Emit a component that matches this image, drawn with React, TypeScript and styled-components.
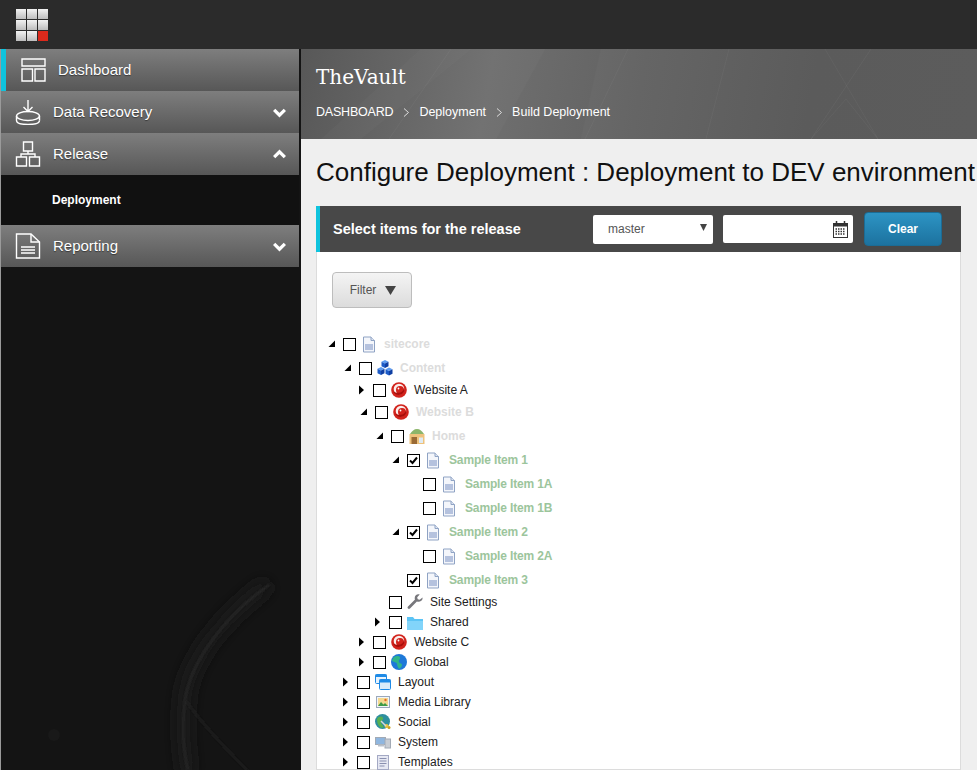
import React from "react";
import styled, { createGlobalStyle } from "styled-components";

const GlobalStyle = createGlobalStyle`
  html, body {
    margin: 0;
    padding: 0;
    height: 100%;
    overflow: hidden;
    background: #efefef;
    font-family: "Liberation Sans", Arial, sans-serif;
  }
`;

type Kind =
  | "doc"
  | "cubes"
  | "swirl"
  | "home"
  | "wrench"
  | "folder"
  | "globe"
  | "windows"
  | "image"
  | "social"
  | "system"
  | "template";

type Tone = "plain" | "muted" | "picked";

type Node = {
  label: string;
  depth: number;
  icon: Kind;
  tone: Tone;
  arrow?: "open" | "closed";
  checked?: boolean;
};

const nodes: Node[] = [
  { label: "sitecore", depth: 0, icon: "doc", tone: "muted", arrow: "open" },
  { label: "Content", depth: 1, icon: "cubes", tone: "muted", arrow: "open" },
  { label: "Website A", depth: 2, icon: "swirl", tone: "plain", arrow: "closed" },
  { label: "Website B", depth: 2, icon: "swirl", tone: "muted", arrow: "open" },
  { label: "Home", depth: 3, icon: "home", tone: "muted", arrow: "open" },
  { label: "Sample Item 1", depth: 4, icon: "doc", tone: "picked", arrow: "open", checked: true },
  { label: "Sample Item 1A", depth: 5, icon: "doc", tone: "picked" },
  { label: "Sample Item 1B", depth: 5, icon: "doc", tone: "picked" },
  { label: "Sample Item 2", depth: 4, icon: "doc", tone: "picked", arrow: "open", checked: true },
  { label: "Sample Item 2A", depth: 5, icon: "doc", tone: "picked" },
  { label: "Sample Item 3", depth: 4, icon: "doc", tone: "picked", checked: true },
  { label: "Site Settings", depth: 3, icon: "wrench", tone: "plain" },
  { label: "Shared", depth: 3, icon: "folder", tone: "plain", arrow: "closed" },
  { label: "Website C", depth: 2, icon: "swirl", tone: "plain", arrow: "closed" },
  { label: "Global", depth: 2, icon: "globe", tone: "plain", arrow: "closed" },
  { label: "Layout", depth: 1, icon: "windows", tone: "plain", arrow: "closed" },
  { label: "Media Library", depth: 1, icon: "image", tone: "plain", arrow: "closed" },
  { label: "Social", depth: 1, icon: "social", tone: "plain", arrow: "closed" },
  { label: "System", depth: 1, icon: "system", tone: "plain", arrow: "closed" },
  { label: "Templates", depth: 1, icon: "template", tone: "plain", arrow: "closed" },
];

const Cube = ({ x, y }: { x: number; y: number }) => (
  <g transform={`translate(${x} ${y})`}>
    <path d="M0 1.800L3.500 0 7 1.800 3.500 3.600z" fill="#5d9cf2" />
    <path d="M0 1.800L3.500 3.600V8L0 6.200z" fill="#1d5cc8" />
    <path d="M7 1.800L3.500 3.600V8L7 6.200z" fill="#0f3fa3" />
  </g>
);

const TreeIcon = ({ kind }: { kind: Kind }) => {
  switch (kind) {
    case "doc":
      return (
        <svg width="16" height="17" viewBox="0 0 16 17">
          <path d="M2.500 1h7.500l3.500 3.500v11.500h-11z" fill="#f4f6fb" stroke="#8fa3c4" />
          <path d="M10 1v3.500h3.500" fill="#dde4f1" stroke="#8fa3c4" />
          <rect x="4" y="8" width="8" height="6" fill="#b5c2de" />
        </svg>
      );
    case "cubes":
      return (
        <svg width="16" height="16" viewBox="0 0 16 16">
          <Cube x={4.500} y={0} />
          <Cube x={0.500} y={7} />
          <Cube x={8.500} y={7.500} />
        </svg>
      );
    case "swirl":
      return (
        <svg width="16" height="16" viewBox="0 0 16 16">
          <circle cx="8" cy="8" r="7.800" fill="#d2231c" />
          <circle cx="8" cy="7" r="5.300" fill="#fbeeec" />
          <circle cx="9" cy="8" r="4" fill="#d2231c" />
          <path d="M2 9.500c2 4 7.500 4.500 10.200 1.300 1.200-1.500 1.500-3.300 1-4.800-0.700 3-3 4.800-5.700 4.800-2.200 0-3.900-0.400-5.500-1.300z" fill="#a80f0b" />
          <circle cx="7.500" cy="6.500" r="0.900" fill="#fff" />
        </svg>
      );
    case "home":
      return (
        <svg width="16" height="16" viewBox="0 0 16 16">
          <path d="M1 6C3 3 5 1 8 1s5 2 7 5z" fill="#8cb56a" />
          <rect x="0.500" y="6" width="15" height="10" fill="#eec27c" />
          <rect x="2.500" y="9" width="5.500" height="7" fill="#9a6a35" />
          <rect x="10" y="9.500" width="4" height="5.500" fill="#dfeaf2" />
        </svg>
      );
    case "wrench":
      return (
        <svg width="16" height="16" viewBox="0 0 16 16">
          <path d="M15.500 3.500l-2.800 2.300-2-0.500-0.500-2 2.500-2.800c-2.500-0.800-5 0.800-5 3.500 0 0.700 0.100 1.200 0.300 1.600l-7 6.900c-0.700 0.800-0.500 1.500 0 2 0.500 0.600 1.300 0.700 2 0l6.900-7.100c2.900 1 6.200-1 5.600-3.900z" fill="#77777c" />
        </svg>
      );
    case "folder":
      return (
        <svg width="16" height="16" viewBox="0 0 16 16">
          <path d="M0 3h6l1.500 2H16v11H0z" fill="#5cc4f5" />
          <rect x="0" y="7" width="16" height="9" fill="#82d4fa" />
        </svg>
      );
    case "globe":
      return (
        <svg width="16" height="16" viewBox="0 0 16 16">
          <circle cx="8" cy="8" r="8" fill="#1e78d8" />
          <path d="M3 3c2-1.500 5-1.500 6 0 1 2-2 3-1 5 1 2 3 1 3 3s-2 3-3 4c-1-2-2-3-2-5S2 8 1 7c0-1 1-3 2-4z" fill="#2fb58a" />
        </svg>
      );
    case "windows":
      return (
        <svg width="16" height="16" viewBox="0 0 16 16">
          <rect x="0.500" y="0.500" width="11" height="9" rx="1" fill="#e7f3fd" stroke="#1e8ae6" />
          <rect x="0.500" y="0.500" width="11" height="2.500" fill="#1e8ae6" />
          <rect x="4.500" y="5.500" width="11" height="10" rx="1" fill="#d9ebfa" stroke="#1e8ae6" />
          <rect x="4.500" y="5.500" width="11" height="3" fill="#1e8ae6" />
        </svg>
      );
    case "image":
      return (
        <svg width="16" height="16" viewBox="0 0 16 16">
          <rect x="1.500" y="2.500" width="13" height="11" fill="#f2f5f9" stroke="#9aa8bb" />
          <rect x="3" y="4" width="10" height="8" fill="#f5d98f" />
          <path d="M3 12l3-4 2.500 2.500L10 9l3 3z" fill="#3f9b48" />
          <circle cx="10.500" cy="6" r="1.200" fill="#e66a28" />
        </svg>
      );
    case "social":
      return (
        <svg width="16" height="16" viewBox="0 0 16 16">
          <circle cx="7.500" cy="7.500" r="7.500" fill="#2e8f9f" />
          <path d="M2 5c2-3 5-3 6-1s-3 3-2 5 3 2 2 5C5 14 2 11 2 5z" fill="#58b050" />
          <circle cx="11.500" cy="12" r="2" fill="#e9c33c" />
          <circle cx="14" cy="13.500" r="1.500" fill="#c9a020" />
          <path d="M6 7l5 5" stroke="#d8d8d8" strokeWidth="1.500" />
        </svg>
      );
    case "system":
      return (
        <svg width="16" height="16" viewBox="0 0 16 16">
          <rect x="0.500" y="3.500" width="10" height="7" fill="#8fb6df" stroke="#a2aab5" />
          <rect x="3" y="10.500" width="6" height="2" fill="#b9c0c9" />
          <rect x="10" y="5" width="5.500" height="9" fill="#c8cdd4" stroke="#a2aab5" />
        </svg>
      );
    case "template":
      return (
        <svg width="16" height="16" viewBox="0 0 16 16">
          <rect x="2.500" y="1.500" width="11" height="14" fill="#e6e8f3" stroke="#a4a9c4" />
          <path d="M4.500 4.500h7M4.500 7h7M4.500 9.500h7M4.500 12h5" stroke="#8a90b0" />
        </svg>
      );
  }
};

const Page = styled.div`
  width: 977px;
  height: 770px;
  overflow: hidden;
  display: flex;
  flex-direction: column;
`;

const TopBar = styled.header`
  height: 49px;
  flex: none;
  display: flex;
  align-items: center;
  padding-left: 16px;
  background: #2b2b2b;
`;

const Logo = styled.div`
  display: grid;
  grid-template-columns: repeat(3, 10px);
  grid-template-rows: repeat(3, 10px);
  gap: 1px;
`;

const LogoCell = styled.span<{ $red?: boolean }>`
  background: ${(p) => (p.$red ? "#dc2a1c" : "linear-gradient(#f2f2f2, #bdbdbd)")};
`;

const Body = styled.div`
  flex: 1;
  min-height: 0;
  display: flex;
`;

const Sidebar = styled.nav`
  position: relative;
  width: 301px;
  flex: none;
  box-sizing: border-box;
  padding-right: 2px;
  border-left: 1px solid #9a9a9a;
  background: #141414;
  overflow: hidden;
`;

const Smoke = styled.svg`
  position: absolute;
  left: 0;
  bottom: 0;
`;

const MenuRow = styled.div<{ $active?: boolean }>`
  position: relative;
  height: 42px;
  box-sizing: border-box;
  display: flex;
  align-items: center;
  padding-left: 14px;
  color: #fff;
  font-size: 15px;
  text-shadow: 0 1px 1px rgba(0, 0, 0, 0.45);
  background: linear-gradient(#7e7e7e, #575757);
  ${(p) => p.$active && "border-left: 5px solid #0fc3dd;"}
`;

const MenuIcon = styled.svg`
  flex: none;
  width: 26px;
  height: 26px;
  fill: none;
  stroke: #fff;
  stroke-width: 1.4;
`;

const MenuLabel = styled.span`
  flex: 1;
  margin: 0 0 2px 12px;
`;

const Chevron = styled.svg`
  width: 15px;
  height: 15px;
  margin-right: 12px;
  fill: none;
  stroke: #fff;
  stroke-width: 3;
`;

const SubMenu = styled.div`
  position: relative;
  height: 50px;
  display: flex;
  align-items: center;
  padding-left: 51px;
  background: #111;
  color: #fff;
  font-size: 12px;
  font-weight: bold;
`;

const Main = styled.main`
  flex: 1;
  min-width: 0;
  display: flex;
  flex-direction: column;
`;

const Hero = styled.section`
  position: relative;
  height: 90px;
  flex: none;
  box-sizing: border-box;
  padding: 14px 15px 0;
  overflow: hidden;
  color: #fff;
  background: linear-gradient(100deg, #585858 0%, #727272 28%, #656565 50%, #5b5b5b 75%, #5c5c5c 100%);
`;

const HeroLines = styled.svg`
  position: absolute;
  inset: 0;
`;

const HeroTitle = styled.div`
  position: relative;
  font-family: "DejaVu Serif", "Liberation Serif", serif;
  font-size: 20px;
  line-height: 28px;
`;

const Crumbs = styled.div`
  position: relative;
  display: flex;
  align-items: center;
  margin-top: 13px;
  font-size: 12.5px;
  line-height: 16px;
`;

const CrumbCaps = styled.span`
  letter-spacing: -0.2px;
`;

const CrumbSep = styled.svg`
  width: 7px;
  height: 9px;
  margin: 0 9.5px;
  fill: none;
  stroke: #ddd;
  stroke-width: 1;
`;

const Content = styled.div`
  flex: 1;
  min-height: 0;
  padding: 0 16px 0 15px;
  background: #efefef;
`;

const Heading = styled.h1`
  margin: 18px 0 19px;
  font-size: 26px;
  font-weight: normal;
  line-height: 30px;
  color: #111;
  white-space: nowrap;
`;

const PanelHead = styled.div`
  height: 46px;
  box-sizing: border-box;
  display: flex;
  align-items: center;
  padding: 0 19px 0 13px;
  border-left: 4px solid #0fc3dd;
  background: #484848;
`;

const PanelTitle = styled.div`
  flex: 1;
  color: #fff;
  font-size: 14.5px;
  font-weight: bold;
`;

const Select = styled.div`
  width: 120px;
  height: 29px;
  box-sizing: border-box;
  display: flex;
  align-items: center;
  justify-content: space-between;
  padding: 0 6px 0 15px;
  border-radius: 2px;
  background: #fff;
  color: #555;
  font-size: 12px;
`;

const SelectArrow = styled.svg`
  width: 7px;
  height: 7px;
  margin-bottom: 3px;
  fill: #444;
`;

const DateField = styled.div`
  width: 130px;
  height: 28px;
  box-sizing: border-box;
  margin-left: 10px;
  display: flex;
  align-items: center;
  justify-content: flex-end;
  padding-right: 5px;
  border-radius: 2px;
  background: #fff;
`;

const ClearButton = styled.button`
  width: 78px;
  height: 34px;
  margin-left: 11px;
  border: 1px solid #1b6c95;
  border-radius: 4px;
  background: linear-gradient(#2d94c4, #1c729f);
  color: #fff;
  font-family: inherit;
  font-size: 12px;
  font-weight: bold;
`;

const PanelBody = styled.div`
  height: 518px;
  box-sizing: border-box;
  padding: 20px 15px 0;
  border: 1px solid #dcdcdc;
  border-top: none;
  background: #fff;
`;

const FilterButton = styled.button`
  width: 80px;
  height: 36px;
  display: flex;
  align-items: center;
  justify-content: center;
  gap: 9px;
  padding: 0 0 0 2px;
  border: 1px solid #bdbdbd;
  border-radius: 4px;
  background: linear-gradient(#f4f4f4, #dcdcdc);
  color: #555;
  font-family: inherit;
  font-size: 12px;
`;

const FilterArrow = styled.svg`
  width: 11px;
  height: 9px;
  fill: #444;
`;

const Tree = styled.div`
  margin: 24px 0 0 -5px;
`;

const TreeRow = styled.div<{ $depth: number; $tone: Tone }>`
  height: ${(p) => (p.$tone === "plain" ? "20px" : "24px")};
  display: flex;
  align-items: center;
  padding-left: ${(p) => 1 + p.$depth * 16 - (p.$tone === "plain" ? 2 : 0)}px;
`;

const ArrowSlot = styled.span`
  position: relative;
  flex: none;
  width: 15px;
  height: 10px;
`;

const Arrow = styled.svg`
  display: block;
  width: 8px;
  height: 10px;
  fill: #000;
`;

const Check = styled.span`
  flex: none;
  width: 13px;
  height: 13px;
  box-sizing: border-box;
  display: flex;
  align-items: center;
  justify-content: center;
  border: 1px solid #000;
  background: #fff;
`;

const CheckMark = styled.svg`
  width: 9px;
  height: 9px;
  fill: none;
  stroke: #000;
  stroke-width: 2;
`;

const IconSlot = styled.span`
  flex: none;
  width: 16px;
  height: 16px;
  margin: 0 7px 0 5px;
`;

const TreeLabel = styled.span<{ $tone: Tone }>`
  font-size: 12px;
  margin-left: ${(p) => (p.$tone === "picked" ? "1px" : "0")};
  letter-spacing: ${(p) => (p.$tone === "picked" ? "-0.15px" : "0")};
  font-weight: ${(p) => (p.$tone === "plain" ? "normal" : "bold")};
  color: ${(p) => (p.$tone === "plain" ? "#222" : p.$tone === "picked" ? "#9cc59c" : "#dcdcdc")};
`;

const Down = () => (
  <Chevron viewBox="0 0 14 14">
    <path d="M2 4.500l5 5 5-5" />
  </Chevron>
);

const Up = () => (
  <Chevron viewBox="0 0 14 14">
    <path d="M2 9.500l5-5 5 5" />
  </Chevron>
);

const Sep = () => (
  <CrumbSep viewBox="0 0 7 9">
    <path d="M1 0.500l4.500 4-4.500 4" />
  </CrumbSep>
);

export default function App() {
  return (
    <Page>
      <GlobalStyle />
      <TopBar>
        <Logo>
          {Array.from({ length: 9 }).map((_, i) => (
            <LogoCell key={i} $red={i === 8} />
          ))}
        </Logo>
      </TopBar>
      <Body>
        <Sidebar>
          <Smoke width="298" height="240" viewBox="0 0 298 240">
            <defs>
              <filter id="soft" x="-30%" y="-30%" width="160%" height="160%">
                <feGaussianBlur stdDeviation="1" />
              </filter>
              <filter id="haze" filterUnits="userSpaceOnUse" x="100" y="0" width="198" height="240">
                <feGaussianBlur stdDeviation="7" />
              </filter>
            </defs>
            <g fill="none" strokeLinecap="round">
              <path d="M262 58C225 85 190 125 184 165c-3 25-2 50 2 75" stroke="#1a1a1a" strokeWidth="14" filter="url(#haze)" />
              <path d="M268 55C225 85 190 130 184 170c-3 25-2 50 3 70" stroke="#2a2a2a" strokeWidth="2" filter="url(#soft)" />
              <path d="M186 172c15 22 40 48 60 68" stroke="#212121" strokeWidth="2" filter="url(#soft)" />
              <path d="M57 205v35" stroke="#191919" strokeWidth="3" filter="url(#soft)" />
            </g>
            <circle cx="53" cy="205" r="6" fill="#191919" />
          </Smoke>
          <MenuRow $active>
            <MenuIcon viewBox="0 0 26 26">
              <path d="M2 2h23v7H2zM2 12h10.500v12H2zM15 12h10v12H15z" />
            </MenuIcon>
            <MenuLabel>Dashboard</MenuLabel>
          </MenuRow>
          <MenuRow>
            <MenuIcon viewBox="0 0 26 26">
              <path d="M13 1v11M8.500 8l4.500 4.500L17.500 8" />
              <ellipse cx="13" cy="17" rx="11.500" ry="4.500" />
              <path d="M1.500 17v4.500C1.500 24 6.500 25.500 13 25.500s11.500-1.500 11.500-4" />
              <path d="M24.500 17v4.500" />
            </MenuIcon>
            <MenuLabel>Data Recovery</MenuLabel>
            <Down />
          </MenuRow>
          <MenuRow>
            <MenuIcon viewBox="0 0 26 26">
              <path d="M8.500 1h9v9h-9zM1.500 16h10v9h-10zM14.500 16h10v9h-10zM13 10v3M6 16v-3h14v3" />
            </MenuIcon>
            <MenuLabel>Release</MenuLabel>
            <Up />
          </MenuRow>
          <SubMenu>Deployment</SubMenu>
          <MenuRow>
            <MenuIcon viewBox="0 0 26 26">
              <path d="M1.500 1h14.500l8.500 8v16h-23z" />
              <path d="M16 1v8h8.500M6 14h14M6 17h14M6 20h14" />
            </MenuIcon>
            <MenuLabel>Reporting</MenuLabel>
            <Down />
          </MenuRow>
        </Sidebar>
        <Main>
          <Hero>
            <HeroLines width="676" height="90" viewBox="0 0 676 90">
              <polygon points="20,90 120,0 170,0 60,90" fill="#fff" opacity="0.02" />
              <polygon points="195,90 244,0 300,0 280,90" fill="#000" opacity="0.02" />
              <g fill="none" stroke="#fff" strokeOpacity="0.04">
                <path d="M88 90L150 0M284 90L327 0M405 90L428 0M510 90L570 0" />
                <path d="M524 0L577 90M510 90L545 50L577 90" />
              </g>
            </HeroLines>
            <HeroTitle>TheVault</HeroTitle>
            <Crumbs>
              <CrumbCaps>DASHBOARD</CrumbCaps>
              <Sep />
              <span>Deployment</span>
              <Sep />
              <span>Build Deployment</span>
            </Crumbs>
          </Hero>
          <Content>
            <Heading>Configure Deployment : Deployment to DEV environment</Heading>
            <PanelHead>
              <PanelTitle>Select items for the release</PanelTitle>
              <Select>
                master
                <SelectArrow viewBox="0 0 7 7">
                  <path d="M0 0h7L3.500 7z" />
                </SelectArrow>
              </Select>
              <DateField>
                <svg width="15" height="17" viewBox="0 0 15 17">
                  <rect x="0.500" y="2.500" width="14" height="14" fill="#fff" stroke="#333" />
                  <rect x="0.500" y="2.500" width="14" height="3" fill="#333" />
                  <path d="M3.500 0v4M11.500 0v4" stroke="#333" strokeWidth="1.500" />
                  <path d="M2.500 8h10M2.500 10.500h10M2.500 13h10" stroke="#333" strokeWidth="1.500" strokeDasharray="1.500 1" />
                </svg>
              </DateField>
              <ClearButton>Clear</ClearButton>
            </PanelHead>
            <PanelBody>
              <FilterButton>
                Filter
                <FilterArrow viewBox="0 0 11 9">
                  <path d="M0 0h11L5.500 9z" />
                </FilterArrow>
              </FilterButton>
              <Tree>
                {nodes.map((n) => (
                  <TreeRow key={n.label} $depth={n.depth} $tone={n.tone}>
                    <ArrowSlot>
                      {n.arrow === "open" && (
                        <Arrow viewBox="0 0 8 10">
                          <path d="M0.500 8h6.500V1.500z" />
                        </Arrow>
                      )}
                      {n.arrow === "closed" && (
                        <Arrow viewBox="0 0 8 10">
                          <path d="M1 0.500l5 4.500-5 4.500z" />
                        </Arrow>
                      )}
                    </ArrowSlot>
                    <Check>
                      {n.checked && (
                        <CheckMark viewBox="0 0 9 9">
                          <path d="M1 4.500l2.500 2.500L8 1.500" />
                        </CheckMark>
                      )}
                    </Check>
                    <IconSlot>
                      <TreeIcon kind={n.icon} />
                    </IconSlot>
                    <TreeLabel $tone={n.tone}>{n.label}</TreeLabel>
                  </TreeRow>
                ))}
              </Tree>
            </PanelBody>
          </Content>
        </Main>
      </Body>
    </Page>
  );
}
